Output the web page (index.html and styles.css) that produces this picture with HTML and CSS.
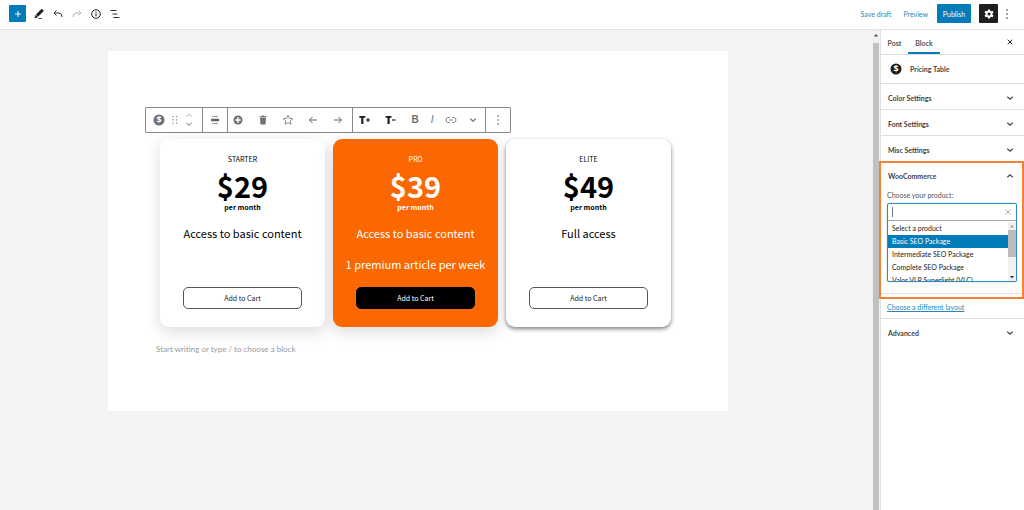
FILE: index.html
```html
<!DOCTYPE html>
<html lang="en">
<head>
<meta charset="utf-8">
<title>Edit Post</title>
<link rel="stylesheet" href="styles.css">
</head>
<body>
<svg class="defs" aria-hidden="true">
  <symbol id="down" viewBox="0 0 8 8"><path d="M1.300 2.700 4 5.200 6.700 2.700" fill="none" stroke="currentColor" stroke-width="1.200"/></symbol>
  <symbol id="dots" viewBox="0 0 4 12"><g fill="currentColor"><circle cx="2" cy="2" r=".9"/><circle cx="2" cy="6" r=".9"/><circle cx="2" cy="10" r=".9"/></g></symbol>
</svg>
<header class="topbar">
  <div class="tools">
    <button class="add" aria-label="Add block"><svg viewBox="0 0 10 10" width="10" height="10"><path d="M5 2v6M2 5h6" stroke="#fff"/></svg></button>
    <button class="tool" aria-label="Edit"><svg viewBox="0 0 12 12" width="12" height="12"><path d="M4 7.600 9.800 1.800" stroke="#1e1e1e" stroke-width="3"/><path d="M2.500 6.700 5 9.200 1.500 10.500z" fill="#1e1e1e"/><path d="M5.500 10.500h3.500" stroke="#1e1e1e" stroke-width=".8"/></svg></button>
    <button class="tool" aria-label="Undo"><svg viewBox="0 0 12 12" width="12" height="12" fill="none" stroke="#333"><path d="M4.500 2.500 2 5l2.500 2.500M2 5h5q3 0 3 4"/></svg></button>
    <button class="tool faded" aria-label="Redo"><svg viewBox="0 0 12 12" width="12" height="12" fill="none" stroke="#333"><path d="M7.500 2.500 10 5 7.500 7.500M10 5H5Q2 5 2 9"/></svg></button>
    <button class="tool" aria-label="Details"><svg viewBox="0 0 12 12" width="12" height="12" fill="none" stroke="#1e1e1e"><circle cx="6" cy="6" r="4.300"/><path d="M6 5.300v3M6 3.500v1"/></svg></button>
    <button class="tool" aria-label="Outline"><svg viewBox="0 0 12 12" width="12" height="12" stroke="#333"><path d="M1.500 2.500h6M3.500 6h5M4.500 9.500h6"/></svg></button>
  </div>
  <div class="actions">
    <button class="text-btn">Save draft</button>
    <button class="text-btn">Preview</button>
    <button class="publish">Publish</button>
    <button class="gear" aria-label="Settings"><svg viewBox="0 0 12 12" width="10" height="10"><circle cx="6" cy="6" r="3" fill="none" stroke="#fff" stroke-width="2.400"/><path d="M6 .5v2M6 9.500v2M1.200 3.250l1.800 1M9 7.750l1.800 1M1.200 8.750l1.800-1M9 4.250l1.800-1" stroke="#fff" stroke-width="2.400"/></svg></button>
    <button class="more" aria-label="Options"><svg width="4" height="12"><use href="#dots"/></svg></button>
  </div>
</header>
<div class="editor">
  <main class="canvas">
    <div class="page">
      <div class="toolbar" role="toolbar" aria-label="Block tools">
        <div class="group wide">
          <button aria-label="Pricing Table"><svg viewBox="0 0 12 12" width="12" height="12"><circle cx="6" cy="6" r="5.500" fill="currentColor"/><text x="6" y="9.200" text-anchor="middle" class="coin-sign">$</text></svg></button>
          <button aria-label="Drag"><svg viewBox="0 0 8 10" width="8" height="10" fill="#888"><path d="M1.500 1h1.200v1.200H1.500zM5 1h1.200v1.200H5zM1.500 4.300h1.200v1.200H1.500zM5 4.300h1.200v1.200H5zM1.500 7.600h1.200v1.200H1.500zM5 7.600h1.200v1.200H5z"/></svg></button>
          <button aria-label="Move"><svg viewBox="0 0 8 14" width="8" height="14" fill="none"><path d="M1.200 3.500 4 1.300 6.800 3.500" stroke="#bbb"/><path d="M1.200 10 4 12.200 6.800 10" stroke="#777"/></svg></button>
        </div>
        <div class="group">
          <button aria-label="Align"><svg viewBox="0 0 10 10" width="10" height="10"><path d="M2 1.500h6M2 8.500h6" stroke="#999"/><path d="M1 3.700h8v2.600H1z" fill="#666"/></svg></button>
        </div>
        <div class="group icons">
          <button aria-label="Add column"><svg viewBox="0 0 10 10" width="10" height="10"><circle cx="5" cy="5" r="4.500" fill="#707070"/><path d="M5 2.300v5.400M2.300 5h5.400" stroke="#fff" stroke-width="1.500"/></svg></button>
          <button aria-label="Delete"><svg viewBox="0 0 10 10" width="10" height="10" fill="#707070"><path d="M1.500 1.200H4V.5h2v.7h2.500v1.300h-7zM2 3h6l-.5 6.500h-5z"/></svg></button>
          <button aria-label="Favorite"><svg viewBox="0 0 12 12" width="12" height="12"><path d="m6 1.300 1.300 3.100 3.500.3-2.700 2.200.9 3.400L6 8.500l-3 1.800.9-3.400L1.200 4.700l3.500-.3z" fill="none" stroke="#777" stroke-width=".8"/></svg></button>
          <button aria-label="Move left"><svg viewBox="0 0 10 10" width="10" height="10" fill="none" stroke="#666"><path d="M9 5H1.500M4.500 2l-3 3 3 3"/></svg></button>
          <button aria-label="Move right"><svg viewBox="0 0 10 10" width="10" height="10" fill="none" stroke="#666"><path d="M1 5h7.500M5.500 2l3 3-3 3"/></svg></button>
        </div>
        <div class="group format">
          <button class="size" aria-label="Increase font">T<svg viewBox="0 0 4 4" width="4" height="4"><path d="M2 0v4M0 2h4" stroke="#1e1e1e" stroke-width="1.200"/></svg></button>
          <button class="size" aria-label="Decrease font">T<svg viewBox="0 0 4 4" width="4" height="4"><path d="M0 2h3.500" stroke="#1e1e1e" stroke-width="1.200"/></svg></button>
          <button class="bold">B</button>
          <button class="italic">I</button>
          <button aria-label="Link"><svg viewBox="0 0 12 8" width="12" height="8" fill="none" stroke="#777" stroke-width=".9"><path d="M5 1.500H3.500a2.500 2.500 0 0 0 0 5H5M7 1.500h1.500a2.500 2.500 0 0 1 0 5H7M4 4h4"/></svg></button>
          <button aria-label="More formatting"><svg width="8" height="8"><use href="#down"/></svg></button>
        </div>
        <div class="group">
          <button class="light" aria-label="More options"><svg width="4" height="12"><use href="#dots"/></svg></button>
        </div>
      </div>
      <div class="cards">
        <section class="card">
          <h2 class="plan">STARTER</h2><p class="price">$29</p><p class="period">per month</p>
          <p class="feature">Access to basic content</p><button class="cart">Add to Cart</button>
        </section>
        <section class="card pro">
          <h2 class="plan">PRO</h2><p class="price">$39</p><p class="period">per month</p>
          <p class="feature">Access to basic content</p><p class="feature">1 premium article per week</p><button class="cart">Add to Cart</button>
        </section>
        <section class="card elite">
          <h2 class="plan">ELITE</h2><p class="price">$49</p><p class="period">per month</p>
          <p class="feature">Full access</p><button class="cart">Add to Cart</button>
        </section>
      </div>
      <p class="prompt">Start writing or type / to choose a block</p>
    </div>
  </main>
  <div class="scroll"><svg viewBox="0 0 8 8" width="8" height="8"><path d="M2 5.500h4L4 3z" fill="#444"/></svg><div class="thumb"></div></div>
  <aside class="sidebar">
    <div class="tabs">
      <button class="tab">Post</button><button class="tab active">Block</button>
      <button class="close" aria-label="Close settings"><svg viewBox="0 0 8 8" width="8" height="8"><path d="m1.700 1.700 4.600 4.600M6.300 1.700 1.700 6.300" stroke="#1e1e1e"/></svg></button>
    </div>
    <div class="block-name"><svg viewBox="0 0 12 12" width="12" height="12"><circle cx="6" cy="6" r="5.500" fill="currentColor"/><text x="6" y="9.200" text-anchor="middle" class="coin-sign">$</text></svg><span>Pricing Table</span></div>
    <button class="row">Color Settings<svg width="8" height="8"><use href="#down"/></svg></button>
    <button class="row">Font Settings<svg width="8" height="8"><use href="#down"/></svg></button>
    <button class="row last">Misc Settings<svg width="8" height="8"><use href="#down"/></svg></button>
    <section class="woo">
      <button class="row open">WooCommerce<svg class="up" width="8" height="8"><use href="#down"/></svg></button>
      <div class="field">
        <label for="product">Choose your product:</label>
        <div class="combo">
          <div class="entry"><span class="caret"></span><input id="product" type="text"><button class="clear" aria-label="Clear"><svg viewBox="0 0 8 8" width="8" height="8"><path d="m1.500 1.500 5 5M6.500 1.500l-5 5" stroke="#999" stroke-width=".8"/></svg></button></div>
          <div class="options">
            <ul role="listbox" aria-label="Products">
              <li role="option">Select a product</li>
              <li role="option" class="selected" aria-selected="true">Basic SEO Package</li>
              <li role="option">Intermediate SEO Package</li>
              <li role="option">Complete SEO Package</li>
              <li role="option">Valor VLP Superlight (VLC)</li>
            </ul>
            <div class="list-scroll"><svg viewBox="0 0 8 8" width="8" height="8"><path d="M2 5.500h4L4 3z" fill="#999"/></svg><div class="list-thumb"></div><svg viewBox="0 0 8 8" width="8" height="8"><path d="M2 3h4L4 5.500z" fill="#333"/></svg></div>
          </div>
        </div>
      </div>
    </section>
    <div class="layout"><a href="#layout">Choose a different layout</a></div>
    <button class="row last">Advanced<svg width="8" height="8"><use href="#down"/></svg></button>
  </aside>
</div>
</body>
</html>
```
FILE: styles.css
```css
* { box-sizing: border-box; }
body {
  margin: 0;
  min-height: 100vh;
  display: flex;
  flex-direction: column;
  font: 7px/10px Lato, "Open Sans", sans-serif;
  color: #1e1e1e;
  background: #f3f3f3;
}
button, input { font: inherit; color: inherit; border: 0; background: none; padding: 0; }
svg { display: block; flex: none; }
h2, p, ul { margin: 0; padding: 0; }
.defs { position: absolute; width: 0; height: 0; }
.coin-sign { font: bold 9px "Open Sans", sans-serif; fill: #fff; }

.topbar {
  display: flex;
  justify-content: space-between;
  height: 30px;
  padding: 0 15px 2px 9px;
  background: #fff;
  border-bottom: 1px solid #e4e4e4;
}
.tools, .actions { display: flex; align-items: center; }
.tools { gap: 7px; }
.add { display: grid; place-items: center; width: 17px; height: 17px; background: #007cba; border-radius: 1px; }
.tool { width: 12px; height: 12px; }
.faded { opacity: .35; }
.text-btn { color: #2a87b8; margin-right: 12px; }
.text-btn + .text-btn { margin-right: 9px; }
.publish { width: 34px; height: 19px; color: #fff; background: #007cba; border-radius: 1px; }
.gear { display: grid; place-items: center; width: 19px; height: 19px; margin: 0 7px 0 8px; background: #1e1e1e; border-radius: 1px; }
.more { color: #777; }

.editor { flex: 1; display: flex; align-items: stretch; }
.canvas { flex: 1; padding: 21px 144px 21px 108px; }
.page { background: #fff; padding: 56px 57px 56px 37px; }

.toolbar { display: flex; width: fit-content; border: 1px solid #888; border-radius: 1px; color: #707070; }
.group { display: flex; align-items: center; justify-content: center; width: 25px; height: 24px; border-left: 1px solid #888; }
.group:first-child { border-left: 0; }
.group.wide { width: 56px; gap: 6px; padding-right: 3px; }
.group.icons { width: 125px; padding-right: 4px; }
.group.icons button { width: 25px; flex: none; display: grid; place-items: center; }
.group.format { width: 133px; justify-content: space-between; padding: 0 8px 0 6px; }
.size { display: flex; align-items: center; font: 800 11px/12px "Open Sans", sans-serif; color: #1e1e1e; margin-right: 4px; }
.bold { font: bold 10px/12px "Liberation Sans", sans-serif; }
.italic { font: italic 10px/12px "Liberation Sans", sans-serif; }
.light { color: #999; }

.cards {
  display: grid;
  grid-template-columns: repeat(3, 1fr);
  gap: 8px;
  margin: 6px 0 0 15px;
  font-family: "Noto Sans CJK SC", "Open Sans", sans-serif;
}
.card {
  display: flex;
  flex-direction: column;
  align-items: center;
  min-height: 188px;
  padding: 14px 0 18px;
  border-radius: 9px;
  background: #fff;
  color: #000;
  text-align: center;
  box-shadow: 0 5px 16px rgba(0, 0, 0, .14);
}
.pro { background: #fb6700; color: #fff; }
.elite { box-shadow: 0 2px 4px rgba(0, 0, 0, .5); }
.plan { font-size: 7px; line-height: 12px; font-weight: 400; }
.price { font-size: 29px; line-height: 30px; font-weight: 700; margin: 5px 0 2px; }
.period { font-size: 7px; line-height: 10px; font-weight: 700; margin-bottom: 13px; }
.feature { font-size: 11px; line-height: 16px; margin-bottom: 15px; }
.feature:last-of-type { margin-bottom: 0; }
.cart { width: 119px; height: 22px; margin-top: auto; border: 1px solid #555; border-radius: 5px; font-size: 7px; line-height: 12px; color: #222; }
.pro .cart { background: #000; border-color: #000; color: #fff; }
.prompt { margin: 16px 0 0 11px; font-size: 8px; line-height: 12px; color: #999; }

.scroll { width: 8px; background: #f1f1f1; padding: 1px 1px 0 0; display: flex; flex-direction: column; align-items: center; }
.thumb { flex: 1; width: 6px; margin-top: 4px; background: #c1c1c1; }
.sidebar { width: 144px; background: #fff; border-left: 1px solid #e0e0e0; }
.tabs { display: flex; height: 25px; padding-right: 10px; border-bottom: 1px solid #e0e0e0; }
.tab { width: 27px; font-weight: 700; color: #555; padding-top: 2px; }
.tab.active { width: 32px; border-bottom: 2px solid #007cba; padding-top: 3px; }
.close { margin-left: auto; }
.block-name { display: flex; align-items: center; gap: 8px; height: 29px; padding-left: 9px; font-weight: 700; border-bottom: 1px solid #e0e0e0; color: #444; }
.block-name svg { color: #1e1e1e; }
.row { display: flex; align-items: center; justify-content: space-between; width: 100%; height: 26px; padding: 2px 10px 0 7px; font-weight: 700; color: #444; border-bottom: 1px solid #e0e0e0; }
.row.last { height: 25px; border-bottom: 0; }
.up { transform: rotate(180deg); }
.woo { position: relative; height: 133px; border-top: 1px solid #e0e0e0; border-bottom: 1px solid #e0e0e0; }
.woo::after { content: ""; position: absolute; inset: -1px 0 -6px -2px; border: 2px solid #f58233; pointer-events: none; }
.row.open { height: 25px; border: 0; }
.field { display: flex; flex-direction: column; gap: 3px; padding: 3px 7px 0 6px; color: #555; }
.combo { border: 1px solid #2d8cbf; border-radius: 2px; box-shadow: 0 0 1px #2d8cbf; color: #222; }
.entry { display: flex; align-items: center; height: 17px; padding: 0 4px; border-bottom: 1px solid #aaa; }
.caret { width: 1px; height: 10px; background: #777; }
.entry input { flex: 1; min-width: 0; outline: 0; }
.options { display: flex; height: 60px; padding-top: 1px; }
.options ul { flex: 1; list-style: none; overflow: hidden; }
.options li { height: 13px; padding-left: 4px; line-height: 13px; white-space: nowrap; }
.options .selected { background: #007cba; color: #fff; }
.list-scroll { width: 8px; display: flex; flex-direction: column; justify-content: space-between; background: #f1f1f1; }
.list-thumb { height: 28px; margin-bottom: 16px; background: #bbb; }
.layout { height: 25px; padding: 8px 6px 0; border-bottom: 1px solid #e0e0e0; }
.layout a { color: #2a87b8; }
```
